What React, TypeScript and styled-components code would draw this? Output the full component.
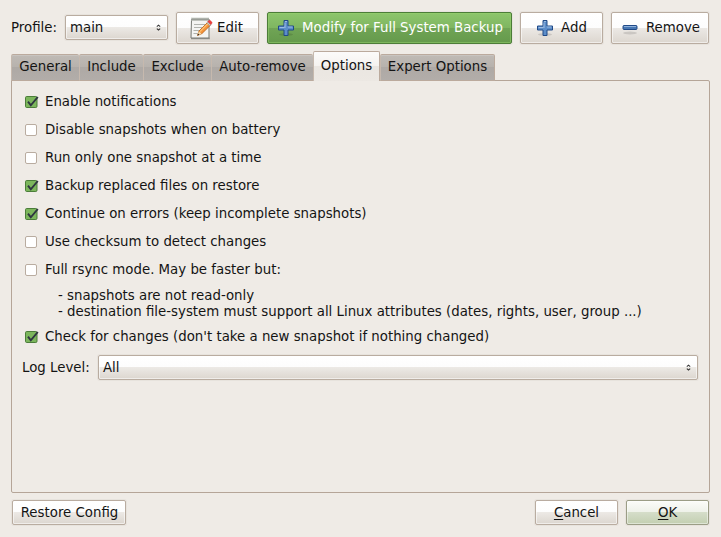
import React from 'react';
import styled, { createGlobalStyle, css } from 'styled-components';

const Global = createGlobalStyle`
  * { box-sizing: border-box; }
  body {
    margin: 0;
    background: #efebe6;
    color: #141414;
    font-family: "DejaVu Sans", sans-serif;
    font-size: 13.333px;
    line-height: 16px;
    white-space: pre;
    overflow: hidden;
  }
`;

const Window = styled.main`
  width: 721px;
  height: 537px;
  padding: 12px 11px;
  display: flex;
  flex-direction: column;
`;

const Toolbar = styled.div`
  display: flex;
  align-items: center;
  height: 32px;
  flex: none;
  gap: 8px;
  padding-right: 1px;
`;

const Text = styled.span``;

const ProfileLabel = styled.span`
  width: 46px;
`;

type Tone = 'plain' | 'green' | 'ok';
const tones = {
  plain: css`
    border-color: #b9aca0;
    background: linear-gradient(#fff, #fdfdfd 49%, #ece9e5 50%, #dcd6cf);
    box-shadow: inset 0 0 0 1px rgba(255,255,255,.55), 0 0 0 1px rgba(120,100,80,.06);
  `,
  green: css`
    border-color: #4c7d38;
    color: #fff;
    background: linear-gradient(#8dc56c, #7fb661 49%, #70a455 50%, #659a4c);
    box-shadow: inset 0 0 0 1px rgba(150,210,110,.5), 0 0 0 1px rgba(120,100,80,.06);
  `,
  ok: css`
    border-color: #9b9d86;
    background: linear-gradient(#fbfcf9, #eef1e9 49%, #d5ddc9 50%, #c3cfb1);
    box-shadow: inset 0 0 0 1px rgba(255,255,255,.45), 0 0 0 1px rgba(120,100,80,.06);
  `,
};

const Button = styled.button<{ $w: number; $h?: number; $tone?: Tone; $gap?: number; $start?: number; $end?: number }>`
  font: inherit;
  color: inherit;
  width: ${p => p.$w}px;
  height: ${p => p.$h ?? 32}px;
  flex: none;
  padding: 0 ${p => p.$end ?? 0}px 0 ${p => p.$start ?? 0}px;
  display: flex;
  align-items: center;
  justify-content: center;
  gap: ${p => p.$gap ?? 4}px;
  border: 1px solid;
  border-radius: 2px;
  white-space: pre;
  ${p => tones[p.$tone ?? 'plain']}
`;

const Select = styled.div<{ $w: number; $raised?: boolean }>`
  width: ${p => p.$w}px;
  height: 25px;
  margin-bottom: ${p => (p.$raised ? 1 : 0)}px;
  flex: none;
  display: flex;
  align-items: center;
  justify-content: space-between;
  padding: 0 6px 0 4px;
  border: 1px solid;
  border-radius: 2px;
  ${tones.plain}
`;

const Tabs = styled.div`
  display: flex;
  align-items: flex-end;
  height: 30px;
  margin-top: 7px;
  flex: none;
  position: relative;
  z-index: 1;
`;

const Tab = styled.div<{ $w: number; $active?: boolean }>`
  width: ${p => p.$w}px;
  height: 27px;
  flex: none;
  padding-top: 4px;
  display: flex;
  justify-content: center;
  border: 1px solid #bbaa9d;
  border-left-color: #c6b9ae;
  border-right-width: 0;
  border-radius: 2px 2px 0 0;
  background: linear-gradient(#bfbab5, #b7b2ad 49%, #aea9a5 50%, #b2ada9);
  box-shadow: inset 0 1px rgba(255,255,255,.15);
  &:last-child { border-right-width: 1px; }
  ${p => p.$active && css`
    height: 30px;
    padding-top: 6px;
    border-right-width: 1px;
    border-bottom: 0;
    background: linear-gradient(#fcfbfa, #f5f2ef 49%, #eae6e1 50%, #ece8e3);
  `}
`;

const Panel = styled.section`
  height: 413px;
  width: 699px;
  margin-top: -1px;
  flex: none;
  border: 1px solid #b5a598;
  border-radius: 0 2px 2px 2px;
  padding: 7px 10px;
`;

const Option = styled.label`
  display: flex;
  align-items: center;
  height: 28px;
  padding-left: 3px;
  gap: 5px;
`;

const Box = styled.svg`
  display: block;
  flex: none;
`;

const Notes = styled.div`
  padding: 4px 0 0 36px;
  height: 39px;
`;

const LogRow = styled.div`
  display: flex;
  align-items: center;
  gap: 7px;
  margin-top: 4px;
`;
const LogLabel = styled.span`
  width: 69px;
  padding-top: 1px;
`;

const Footer = styled.footer`
  display: flex;
  gap: 8px;
  margin-top: 7px;
  padding: 0 1px;
`;
const Spacer = styled.div`flex: 1;`;

const Mnemonic = styled.span`
  text-decoration: underline;
  text-decoration-thickness: 1px;
  text-underline-offset: 2px;
`;

function Check({ on }: { on?: boolean }) {
  return (
    <Box width="15" height="14" viewBox="0 0 15 14">
      {on ? (
        <>
          <rect x=".5" y="1.5" width="11.500" height="11" rx="1.2" fill="#7cb65c" stroke="#4c7d3a" />
          <path d="M3 6.600 5.800 10.300 12.800 2" fill="none" stroke="#2e3440" strokeWidth="1.9" />
        </>
      ) : (
        <rect x=".5" y="1.500" width="11" height="11" rx="1.5" fill="#fff" stroke="#b9aca0" />
      )}
    </Box>
  );
}

const Arrows = () => (
  <svg width="5" height="7" viewBox="0 0 5 7">
    <path d="M.8 2.600 2.500 1.200l1.700 1.400M.8 4.600l1.700 1.400 1.700-1.400" fill="none" stroke="#333" strokeWidth="1.1" />
  </svg>
);

function Sign({ plus }: { plus?: boolean }) {
  return (
    <svg width="18" height="18" viewBox="0 0 18 18">
      <ellipse cx="9" cy={plus ? 15.5 : 14} rx="7" ry="1.4" fill="#000" opacity=".12" />
      {plus ? (
        <>
          <path d="M7 1.500h4v5.500h5.500v4h-5.500v5.500h-4v-5.500h-5.500v-4h5.500z" fill="#5c8dc9" stroke="#204a87" strokeLinejoin="round" />
          <path d="M8 9v-5.500M2.500 8.500h5M8 2.500h2M11 8h4.500" fill="none" stroke="#9dbde2" strokeWidth="1" />
        </>
      ) : (
        <>
          <rect x="2" y="6.5" width="14" height="4" rx="1" fill="#4777b3" stroke="#204a87" />
          <path d="M3 7.5h12" stroke="#8eb1dc" />
        </>
      )}
    </svg>
  );
}

const Notepad = () => (
  <svg width="24" height="24" viewBox="0 0 24 24">
    <path d="M2 22.500h19" stroke="#000" strokeWidth="1.500" opacity=".3" />
    <path d="M2.500 3h17.500v19H2z" fill="#f4f4f2" stroke="#777973" />
    <path d="M2.500 2.500h17.500v2h-17.500z" fill="#6b6e69" />
    <path d="M3 1v4M5 1v4M7 1v4M9 1v4M11 1v4M13 1v4M15 1v4M17 1v4M19 1v4" stroke="#d3d7cf" strokeWidth=".9" />
    <path d="M5 8.500h11M5 11.500h8M4.500 14.500h6M4.500 17.500h4" stroke="#b1b3ae" />
    <path d="M8.500 19.500 10 15 18.500 6.500 21.300 9.300 13 17.500z" fill="#f5933a" stroke="#b75b0c" strokeWidth=".8" />
    <path d="m11 15.500 8.500-8.500" stroke="#fcc070" strokeWidth="1.200" />
    <path d="m8.500 19.500 1.300-4.300 2.700 2.500z" fill="#f1d9aa" />
    <path d="m8.500 19.500.5-1.900 1.400 1.200z" fill="#222" />
    <path d="m17.800 6.800 1.200-1.200 3.200 3.200-1.200 1.200z" fill="#c5c9c4" stroke="#888a85" strokeWidth=".4" />
    <path d="m18.800 5.500.8-.8q1-.9 2.100.2l.8.800q1 1.100.1 2l-.8.900z" fill="#ef3e3e" stroke="#c22" strokeWidth=".5" />
  </svg>
);

const options = [
  ['Enable notifications', true],
  ['Disable snapshots when on battery', false],
  ['Run only one snapshot at a time', false],
  ['Backup replaced files on restore', true],
  ['Continue on errors (keep incomplete snapshots)', true],
  ['Use checksum to detect changes', false],
  ['Full rsync mode. May be faster but:', false],
] as const;

export default function App() {
  return (
    <>
      <Global />
      <Window>
        <Toolbar>
          <ProfileLabel>Profile:</ProfileLabel>
          <Select $w={103} $raised><Text>main</Text><Arrows /></Select>
          <Button $w={83} $end={3}><Notepad /><Text>Edit</Text></Button>
          <Button $w={245} $tone="green" $gap={7} $start={1}><Sign plus /><Text>Modify for Full System Backup</Text></Button>
          <Button $w={83} $gap={7}><Sign plus /><Text>Add</Text></Button>
          <Button $w={98} $gap={7} $start={1}><Sign /><Text>Remove</Text></Button>
        </Toolbar>
        <Tabs>
          <Tab $w={68}>General</Tab>
          <Tab $w={64}>Include</Tab>
          <Tab $w={68}>Exclude</Tab>
          <Tab $w={102}>Auto-remove</Tab>
          <Tab $w={67} $active>Options</Tab>
          <Tab $w={115}>Expert Options</Tab>
        </Tabs>
        <Panel>
          {options.map(([label, on]) => (
            <Option key={label}><Check on={on} /><Text>{label}</Text></Option>
          ))}
          <Notes>{'- snapshots are not read-only\n- destination file-system must support all Linux attributes (dates, rights, user, group ...)'}</Notes>
          <Option><Check on /><Text>Check for changes (don't take a new snapshot if nothing changed)</Text></Option>
          <LogRow><LogLabel>Log Level:</LogLabel><Select $w={600}><Text>All</Text><Arrows /></Select></LogRow>
        </Panel>
        <Footer>
          <Button $w={114} $h={25} $start={1}><Text>Restore Config</Text></Button>
          <Spacer />
          <Button $w={83} $h={25}><Text><Mnemonic>C</Mnemonic>ancel</Text></Button>
          <Button $w={83} $h={25} $tone="ok"><Text><Mnemonic>O</Mnemonic>K</Text></Button>
        </Footer>
      </Window>
    </>
  );
}
